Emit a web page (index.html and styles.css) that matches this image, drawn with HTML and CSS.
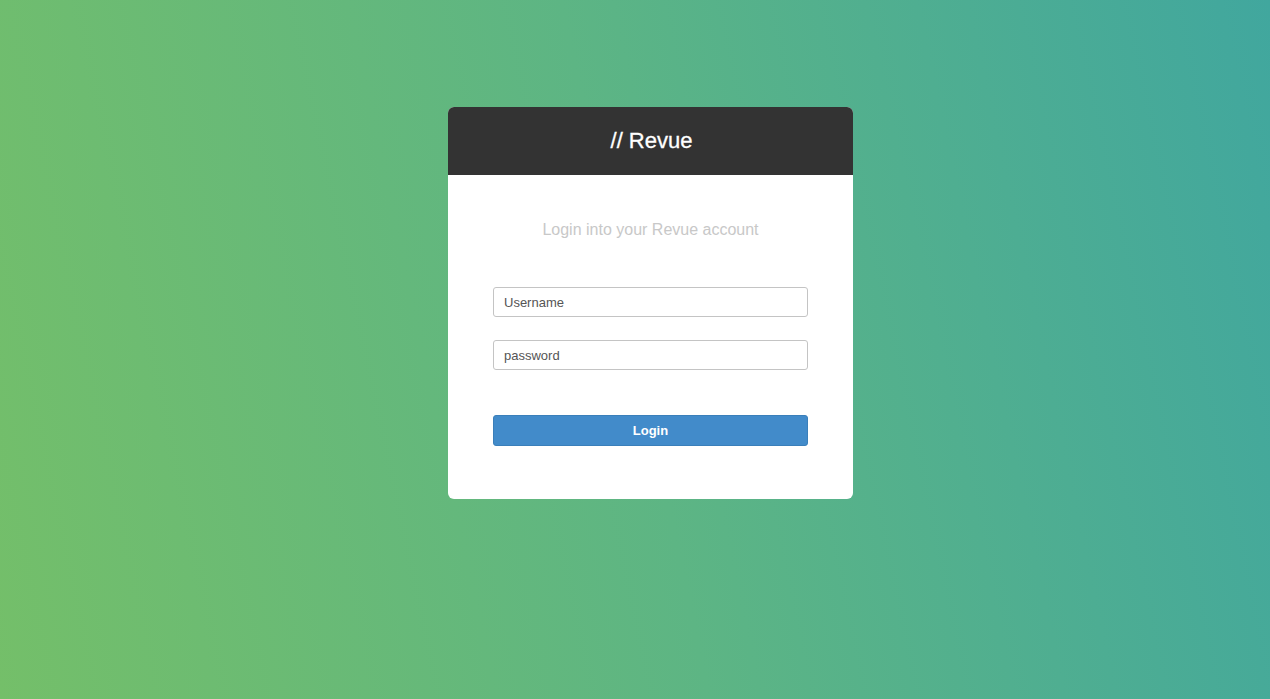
FILE: index.html
```html
<!DOCTYPE html>
<html>
<head>
<meta charset="utf-8">
<link rel="stylesheet" href="styles.css">
</head>
<body>
<main class="page">
  <div class="card">
    <div class="card-header">// Revue</div>
    <div class="card-body">
      <p class="subtitle">Login into your Revue account</p>
      <form class="form">
        <input class="field" type="text" placeholder="Username">
        <input class="field" type="password" placeholder="password">
        <button class="btn" type="button">Login</button>
      </form>
    </div>
  </div>
</main>
</body>
</html>
```
FILE: styles.css
```css
html, body {
  margin: 0;
  padding: 0;
  height: 100%;
}
body {
  font-family: "Liberation Sans", Arial, Helvetica, sans-serif;
  background: linear-gradient(78deg, #74bf69 0%, #5db584 50%, #41a79e 100%);
}
.page {
  height: 100%;
  display: flex;
  justify-content: center;
  align-items: flex-start;
  padding-top: 107px;
  padding-left: 31px;
  box-sizing: border-box;
}
.card {
  width: 405px;
  background: #fff;
  border-radius: 6px;
  overflow: hidden;
}
.card-header {
  height: 68px;
  background: #333333;
  color: #fff;
  font-size: 22px;
  display: flex;
  align-items: center;
  justify-content: center;
  padding-left: 2px;
  -webkit-text-stroke: 0.3px #fff;
}
.card-body {
  padding: 45px 45px 53px;
}
.subtitle {
  margin: 0;
  text-align: center;
  color: #c8c8c8;
  font-size: 16px;
  line-height: 20px;
}
.form {
  display: flex;
  flex-direction: column;
  margin-top: 47px;
}
.field {
  height: 30px;
  box-sizing: border-box;
  border: 1px solid #c4c4c4;
  border-radius: 3px;
  padding: 0 10px;
  font-family: "Liberation Sans", Arial, sans-serif;
  font-size: 13px;
  color: #555;
  margin: 0 0 23px;
  outline: none;
}
.field::placeholder {
  color: #555;
}
.field:last-of-type {
  margin-bottom: 45px;
}
.btn {
  height: 31px;
  box-sizing: border-box;
  background: #428bca;
  border: 1px solid #3a7fba;
  border-radius: 3px;
  color: #fff;
  font-family: "Liberation Sans", Arial, sans-serif;
  font-weight: bold;
  font-size: 13px;
  padding: 0;
}
```
